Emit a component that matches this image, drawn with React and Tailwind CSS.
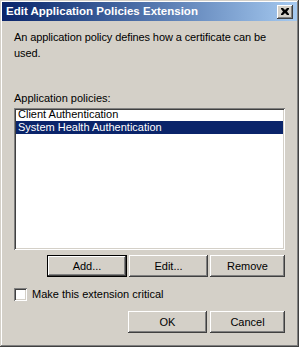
import React from 'react';

const btn =
  'flex-1 flex items-center justify-center bg-[#d4d0c8] text-black text-[11px] shadow-[inset_-1px_-1px_0_#404040,inset_1px_1px_0_#ffffff,inset_-2px_-2px_0_#808080,inset_2px_2px_0_#d4d0c8]';

const Button = ({ children, isDefault, className = '' }) => (
  <div className={`h-[22px] flex flex-col ${isDefault ? 'border border-black' : ''} ${className}`}>
    <div className={btn}>{children}</div>
  </div>
);

const sunken =
  'shadow-[inset_1px_1px_0_#808080,inset_-1px_-1px_0_#ffffff,inset_2px_2px_0_#404040,inset_-2px_-2px_0_#d4d0c8]';

export default function App() {
  return (
    <div
      className="w-[299px] h-[347px] bg-[#d4d0c8] p-[2px] shadow-[inset_-1px_-1px_0_#404040,inset_1px_1px_0_#d4d0c8,inset_-2px_-2px_0_#808080,inset_2px_2px_0_#ffffff] flex flex-col"
      style={{ fontFamily: '"Liberation Sans", Arial, sans-serif' }}
    >
      {/* Title bar */}
      <div className="h-[19px] flex items-center justify-between pl-[4px] pr-[4px] bg-gradient-to-r from-[#0a246a] to-[#a6caf0]">
        <span className="text-white font-bold text-[11.5px] leading-none">Edit Application Policies Extension</span>
        <div className="w-[16px] h-[14px] bg-[#d4d0c8] flex items-center justify-center shadow-[inset_-1px_-1px_0_#404040,inset_1px_1px_0_#ffffff,inset_-2px_-2px_0_#808080]">
          <svg width="8" height="7" viewBox="0 0 8 7">
            <path d="M0 0h2l2 2 2-2h2v1L6 3.5 8 6v1H6L4 5 2 7H0V6l2-2.5L0 1z" fill="#000" />
          </svg>
        </div>
      </div>

      <div className="flex flex-col px-[12px] pt-[8px] text-[11px] text-black">
        <p className="pr-[14px] leading-[16px] tracking-[-0.1px]">
          An application policy defines how a certificate can be used.
        </p>

        <p className="mt-[30px] leading-[14px]">Application policies:</p>

        <div className={`mt-[3px] h-[142px] bg-white ${sunken} px-[2px]`}>
          <div className="h-[13px] leading-[13px] px-[2px]">Client Authentication</div>
          <div className="h-[13px] leading-[13px] px-[2px] bg-[#0a246a] text-white">System Health Authentication</div>
        </div>

        <div className="mt-[5px] flex justify-end gap-[2px]">
          <Button isDefault className="w-[80px]">Add...</Button>
          <Button className="w-[79px]">Edit...</Button>
          <Button className="w-[75px]">Remove</Button>
        </div>

        <div className="mt-[10px] flex items-center gap-[5px]">
          <div className={`w-[13px] h-[13px] bg-white ${sunken}`} />
          <span className="leading-[14px]">Make this extension critical</span>
        </div>

        <div className="mt-[10px] flex justify-end gap-[3px]">
          <Button className="w-[79px]">OK</Button>
          <Button className="w-[75px]">Cancel</Button>
        </div>
      </div>
    </div>
  );
}
